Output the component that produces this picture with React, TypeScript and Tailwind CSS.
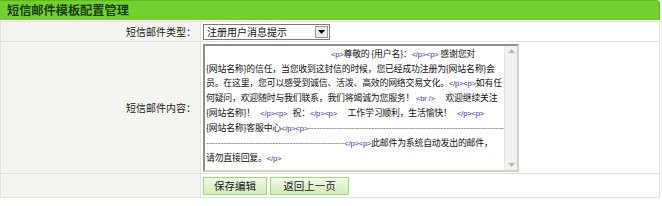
import React from "react";

const isTag = (s: string) => /^(<\/?p>|<br \/>)$/.test(s);

function Rich({ text }: { text: string }) {
  const parts = text.split(/(<\/?p>|<br \/>)/g);
  return (
    <>
      {parts.map((p, i) =>
        isTag(p) ? (
          <span key={i} className="font-['Liberation_Sans',sans-serif] text-[7.6px] tracking-[-0.2px] text-[#33338f]">
            {p}
          </span>
        ) : (
          <span key={i}>{p}</span>
        )
      )}
    </>
  );
}

function ContentBox() {
  return (
    <div className="flex h-[128px] w-[316px] border-2 border-t-[#8e8e8e] border-l-[#8e8e8e] border-r-[#d4d0c8] border-b-[#d4d0c8] bg-white">
      <div className="flex-1 overflow-hidden pl-[1px] pt-px text-[8.9px] leading-[14px] tracking-[-0.2px] text-[#111] whitespace-pre">
        <div className="pl-[125px]">
          <Rich text="<p>尊敬的 {用户名}：</p><p> 感谢您对" />
        </div>
        <div>
          <Rich text="{网站名称}的信任，当您收到这封信的时候，您已经成功注册为{网站名称}会" />
        </div>
        <div>
          <Rich text="员。在这里，您可以感受到诚信、活泼、高效的网络交易文化。</p><p>如有任" />
        </div>
        <div>
          <Rich text="何疑问，欢迎随时与我们联系，我们将竭诚为您服务！ <br />      欢迎继续关注" />
        </div>
        <div>
          <Rich text="{网站名称}！   </p><p>   祝：</p><p>      工作学习顺利，生活愉快！   </p><p>" />
        </div>
        <div>
          <Rich text="{网站名称}客服中心</p><p>" />
          <span className="text-[#666]">{"-".repeat(72)}</span>
        </div>
        <div>
          <span className="text-[#666]">{"-".repeat(48)}</span>
          <Rich text="</p><p>此邮件为系统自动发出的邮件，" />
        </div>
        <div>
          <Rich text="请勿直接回复。</p>" />
        </div>
      </div>
      <div className="flex w-[13px] flex-col items-center justify-between border-l border-[#e4e4e0] bg-[#f1f1ef] py-[3px]">
        <svg width="7" height="4" viewBox="0 0 7 4">
          <path d="M0 4 L3.5 0 L7 4 Z" fill="#b6b6b6" />
        </svg>
        <svg width="7" height="4" viewBox="0 0 7 4">
          <path d="M0 0 L3.5 4 L7 0 Z" fill="#b6b6b6" />
        </svg>
      </div>
    </div>
  );
}

export default function App() {
  return (
    <div className="h-[206px] w-[662px] bg-white font-['Noto_Sans_CJK_SC','Noto_Sans',sans-serif] text-[10px] text-[#222]">
      <div className="flex h-[20px] w-[660px] items-center rounded-tr-[4px] border-t border-r border-[#5db623] bg-[#74cf31] pl-[7px] text-[12.2px] font-bold text-[#173f0c]">
        短信邮件模板配置管理
      </div>
      <div className="mt-px grid w-[660px] grid-cols-[200px_1fr] border border-[#e2e2d8]">
        <div className="flex h-[20px] items-center justify-end border-r border-b border-[#e2e2d8] bg-[#f4f4f0] pr-[4px]">
          短信邮件类型：
        </div>
        <div className="flex h-[20px] items-center border-b border-[#e2e2d8] bg-white pl-[2px]">
          <div className="flex h-[16px] w-[127px] items-center border border-[#7a7a7a] bg-white">
            <span className="flex-1 pl-[3px] text-[#111]">注册用户消息提示</span>
            <div className="mr-px flex h-[12px] w-[13px] items-center justify-center border border-[#9a9a9a] bg-[#ebebeb]">
              <svg width="7" height="4" viewBox="0 0 7 4">
                <path d="M0 0 L7 0 L3.5 4 Z" fill="#000" />
              </svg>
            </div>
          </div>
        </div>
        <div className="flex h-[132px] items-center justify-end border-r border-b border-[#e2e2d8] bg-[#f4f4f0] pr-[4px]">
          短信邮件内容：
        </div>
        <div className="flex h-[132px] items-center border-b border-[#e2e2d8] bg-white pl-[2px]">
          <ContentBox />
        </div>
        <div className="h-[23px] border-r border-[#e2e2d8] bg-[#f4f4f0]" />
        <div className="flex h-[23px] items-center gap-[3px] bg-white pl-[2px]">
          <button className="flex h-[18px] w-[64px] items-center justify-center border border-[#9fd874] bg-gradient-to-b from-[#f2fae9] to-[#d2ecb8] text-[10.5px] text-[#222]">
            保存编辑
          </button>
          <button className="flex h-[18px] w-[79px] items-center justify-center border border-[#9fd874] bg-gradient-to-b from-[#f2fae9] to-[#d2ecb8] text-[10.5px] text-[#222]">
            返回上一页
          </button>
        </div>
      </div>
    </div>
  );
}
